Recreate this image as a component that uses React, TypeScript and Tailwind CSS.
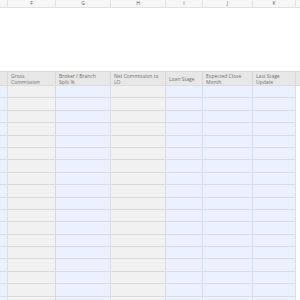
import React from 'react';

const cols = [
  { letter: '', width: 'w-[8px]', label: [] as string[], tint: 'blue' },
  { letter: 'F', width: 'w-[48px]', label: ['Gross', 'Commission'], tint: 'gray' },
  { letter: 'G', width: 'w-[55px]', label: ['Broker / Branch', 'Split %'], tint: 'blue' },
  { letter: 'H', width: 'w-[55px]', label: ['Net Commission to', 'LO'], tint: 'gray' },
  { letter: 'I', width: 'w-[37px]', label: ['Loan Stage'], tint: 'blue' },
  { letter: 'J', width: 'w-[50px]', label: ['Expected Close', 'Month'], tint: 'blue' },
  { letter: 'K', width: 'w-[43px]', label: ['Last Stage', 'Update'], tint: 'blue' },
];

const rowCount = 18;

export default function App() {
  return (
    <div className="w-[300px] h-[300px] overflow-hidden bg-white font-['Open_Sans',sans-serif]">
      {/* column letters */}
      <div className="flex h-[8px] bg-[#f7f7f7] border-b border-[#e2e2e2]">
        {cols.map((c, i) => (
          <div
            key={i}
            className={`${c.width} shrink-0 border-r border-[#e2e2e2] flex items-center justify-center text-[5px] leading-none text-[#555]`}
          >
            {c.letter}
          </div>
        ))}
      </div>

      <div className="h-[63px]" />

      {/* header row */}
      <div className="flex h-[15px] bg-[#e7e7e7] border-y border-[#dcdcdc]">
        {cols.map((c, i) => (
          <div
            key={i}
            className={`${c.width} shrink-0 border-r border-[#d8d8d8] px-[3px] flex flex-col justify-center text-[5px] leading-[6px] text-[#707070] whitespace-nowrap overflow-hidden`}
          >
            {c.label.map((l) => (
              <span key={l}>{l}</span>
            ))}
          </div>
        ))}
      </div>

      {/* body rows */}
      {Array.from({ length: rowCount }).map((_, r) => (
        <div key={r} className="flex h-[12.4px]">
          {cols.map((c, i) => (
            <div
              key={i}
              className={`${c.width} shrink-0 border-b ${
                c.tint === 'blue'
                  ? 'bg-[#ebf2fd] border-r border-r-[#d6e0ec] border-b-[#d9dde3]'
                  : 'bg-[#f1f1f1] border-r border-r-[#d9d9d9] border-b-[#dadada]'
              }`}
            />
          ))}
        </div>
      ))}
    </div>
  );
}
